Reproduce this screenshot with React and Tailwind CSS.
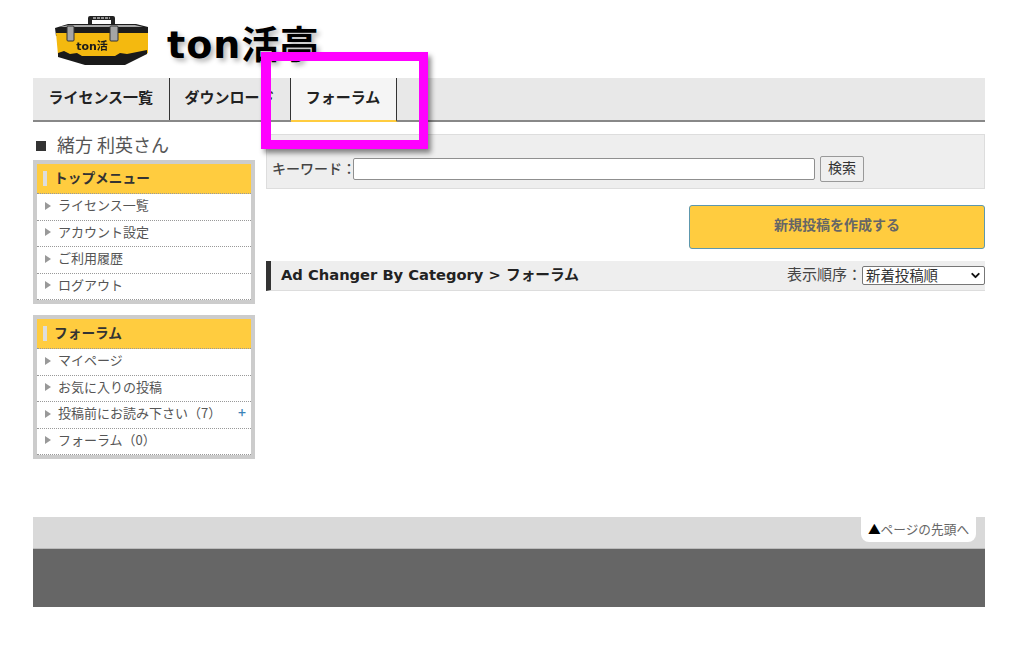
import { ChevronDown } from "lucide-react";

const jp = "font-['Noto_Sans_CJK_JP','Noto_Sans',sans-serif]";

function Toolbox() {
  return (
    <svg width="94" height="54" viewBox="0 0 94 54" className="block blur-[0.4px]">
      <path d="M33 14 V6 Q33 4 35 4 H58 Q60 4 60 6 V14 H56 V8 H37 V14 Z" fill="#222" />
      <path d="M38 6 H55" stroke="#bbb" strokeWidth="1.5" strokeDasharray="3 1" />
      <path d="M0 16 L13 12 H81 L93 15 V24 H1 Z" fill="#1c1c1c" />
      <path d="M4 15 L14 13 H80 L88 15 Z" fill="#a8a8a8" />
      <path d="M1 21 H93 V41 L70 52 H30 L3 43 Z" fill="#f4b90f" />
      <path d="M3 41 L9 39 L15 42 L22 41 L27 44 H60 L65 41 L72 42 L92 38 V42 L70 53 H30 L3 45 Z" fill="#1a1a1a" />
      <rect x="12" y="14" width="7" height="15" rx="1" fill="#a5a5a5" stroke="#333" />
      <rect x="55" y="14" width="8" height="15" rx="1" fill="#a5a5a5" stroke="#333" />
      <text x="37" y="38" textAnchor="middle" fontSize="11" fontWeight="700" fill="#1a1a1a" fontFamily="'DejaVu Sans','Noto Sans CJK JP',sans-serif">ton活</text>
    </svg>
  );
}

function MenuRow({ children, plus }) {
  return (
    <li className="flex h-[26.5px] items-center justify-between border-b border-dotted border-[#999] pb-[4px] pl-[8px] pr-[5px] text-[13px] text-[#555]">
      <span className="flex items-center">
        <span className="mr-[7px] mt-[2px] h-0 w-0 border-y-[4px] border-l-[6px] border-y-transparent border-l-[#999]" />
        {children}
      </span>
      {plus && <span className="text-[14px] font-medium text-[#3b82b8]">+</span>}
    </li>
  );
}

function MenuBox({ title, items }) {
  return (
    <div className="border-[4px] border-[#cccccc] bg-white">
      <div className="flex h-[30px] items-center border-b border-dotted border-[#999] bg-[#ffcc3f] pb-[2px] pl-[6px] text-[13.7px] font-bold text-[#333]">
        <span className="mr-[7px] mt-[2px] h-[15px] w-[4px] bg-[#dddddd]" />
        {title}
      </div>
      <ul>
        {items.map((it) => (
          <MenuRow key={it.t} plus={it.plus}>{it.t}</MenuRow>
        ))}
      </ul>
    </div>
  );
}

export default function App() {
  return (
    <div className={`relative h-[647px] w-[1024px] overflow-hidden bg-white ${jp}`}>
      <div className="mx-[33px] w-[952px]">
        <header className="flex h-[78px] items-start pl-[22px] pt-[12px]">
          <Toolbox />
          <div className="ml-[18px] mt-[11px] font-['DejaVu_Sans','Noto_Sans_CJK_JP',sans-serif] text-[38px] font-bold leading-[44px] tracking-[1px] text-black [text-shadow:3px_3px_5px_rgba(0,0,0,0.3)]">
            ton活亭
          </div>
        </header>

        <nav className="flex h-[44px] border-b-[2px] border-[#888] bg-[#e8e8e8] text-[15px] font-bold text-[#222]">
          <a className="flex w-[136.5px] items-center justify-center border-r border-[#333] pb-[4px]">ライセンス一覧</a>
          <a className="flex w-[121px] items-center justify-center border-r border-[#333] pb-[4px]">ダウンロード</a>
          <a className="-mb-[2px] flex w-[106px] items-center justify-center border-r border-b-[2px] border-r-[#333] border-b-[#ffcc3f] bg-[#f5f5f5] pb-[4px]">フォーラム</a>
        </nav>

        <div className="mt-[10px] flex gap-[11px]">
          <aside className="w-[222px]">
            <div className="flex h-[28px] items-center pb-[3px] pl-[3px] text-[18px] text-[#555]">
              <span className="mr-[11px] mt-[2px] h-[10px] w-[10px] bg-[#333]" />
              緒方&nbsp;利英さん
            </div>
            <MenuBox
              title="トップメニュー"
              items={[{ t: "ライセンス一覧" }, { t: "アカウント設定" }, { t: "ご利用履歴" }, { t: "ログアウト" }]}
            />
            <div className="mt-[11px]">
              <MenuBox
                title="フォーラム"
                items={[{ t: "マイページ" }, { t: "お気に入りの投稿" }, { t: "投稿前にお読み下さい（7）", plus: true }, { t: "フォーラム（0）" }]}
              />
            </div>
          </aside>

          <main className="w-[719px] pt-[2px]">
            <div className="flex h-[55px] items-center border border-[#dddddd] bg-[#eeeeee] pl-[5px] pt-[14px] text-[14px] text-[#444]">
              <span className="font-medium">キーワード：</span>
              <input className="-ml-[3px] h-[22px] w-[462px] rounded-[2px] border border-[#8f8f8f] bg-white" />
              <button className="ml-[5px] h-[26px] w-[44px] rounded-[2px] border border-[#999] bg-[#efefef] pb-[2px] text-[14px] text-[#333]">検索</button>
            </div>
            <div className="mt-[16px] flex justify-end">
              <button className="h-[44px] w-[296px] rounded-[3px] border border-[#5d97ad] bg-[#ffcc3f] pb-[5px] text-[14px] font-bold text-[#666]">
                新規投稿を作成する
              </button>
            </div>
            <div className="mt-[12px] flex h-[30px] items-center justify-between border-b border-l-[5px] border-b-[#dddddd] border-l-[#333] bg-[#eeeeee] pl-[10px]">
              <span className="font-['DejaVu_Sans','Noto_Sans_CJK_JP',sans-serif] text-[14.7px] font-bold text-[#222]">Ad Changer By Category &gt; フォーラム</span>
              <span className="flex items-center text-[15px] text-[#444]">
                <span className="pb-[2px]">表示順序：</span>
                <div className="flex h-[19px] w-[123px] items-center justify-between rounded-[2px] border border-[#777] bg-white pl-[3px] pr-[2px] text-[14.4px] leading-[14px] text-[#333]">
                  <span className="pb-[2px]">新着投稿順</span>
                  <ChevronDown size={13} strokeWidth={3.5} className="text-[#111]" />
                </div>
              </span>
            </div>
          </main>
        </div>

        <footer className="mt-[58px]">
          <div className="flex h-[32px] items-start justify-end border-b border-[#bbb] bg-[#d9d9d9] pr-[9px]">
            <a className="flex h-[25px] w-[115px] items-center justify-center rounded-b-[8px] bg-white pb-[1px] text-[12.7px] text-[#666]">
              <span className="text-black">▲</span>ページの先頭へ
            </a>
          </div>
          <div className="h-[58px] bg-[#666666]" />
        </footer>
      </div>

      <div className="absolute left-[261px] top-[52px] h-[97px] w-[167px] border-[9px] border-l-[10px] border-[#ff00ff] shadow-[3px_4px_5px_rgba(0,0,0,0.45)]" />
    </div>
  );
}
